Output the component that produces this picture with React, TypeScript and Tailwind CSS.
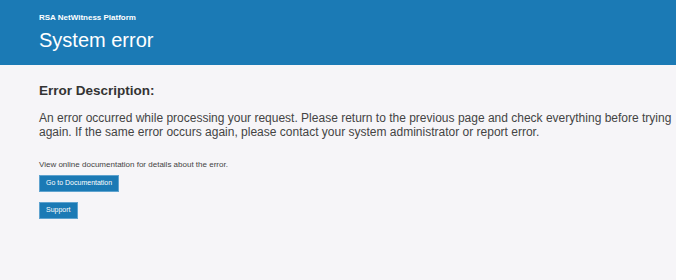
import React from 'react';

function App() {
  return (
    <div className="min-h-screen bg-[#f6f5f8] text-[#333] font-[family-name:'Liberation_Sans',Arial,sans-serif]">
      <header className="bg-[#1b7ab5] h-[65px] px-[39px] pt-[12px] text-white">
        <div className="text-[8px] font-bold leading-[12px]">RSA NetWitness Platform</div>
        <h1 className="text-[20px] leading-[26px] mt-[3px]">System error</h1>
      </header>

      <main className="pl-[39px] pr-[4px] pt-[18px]">
        <h2 className="text-[13.5px] font-bold leading-[16px]">Error Description:</h2>
        <p className="mt-[12px] text-[12px] leading-[14px] text-[#444]">
          An error occurred while processing your request. Please return to the previous page and check everything before trying again. If the same error occurs again, please contact your system administrator or report error.
        </p>
        <p className="mt-[21px] text-[8px] leading-[10px] text-[#444]">View online documentation for details about the error.</p>
        <div className="flex flex-col items-start gap-[10px] mt-[5px]">
          <button className="bg-[#1b7ab5] text-white text-[7px] h-[17px] px-[6px] border border-[#5fa3cf]">
            Go to Documentation
          </button>
          <button className="bg-[#1b7ab5] text-white text-[7px] h-[17px] px-[6px] border border-[#5fa3cf]">
            Support
          </button>
        </div>
      </main>
    </div>
  );
}

export default App;
